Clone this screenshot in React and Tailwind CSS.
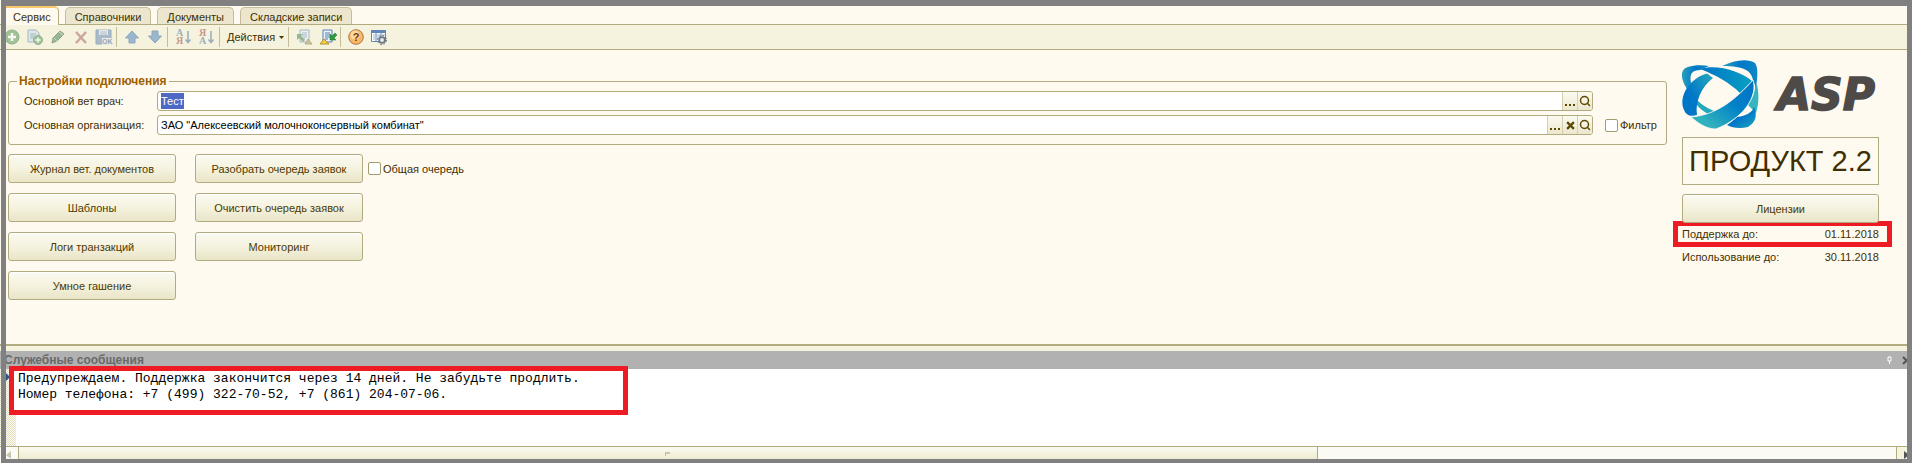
import { Search } from "lucide-react";

const tabs = ["Сервис", "Справочники", "Документы", "Складские записи"];

const buttonLook =
  "rounded-[3px] border border-[#b3ab80] bg-linear-to-b from-[#fbfaf1] via-[#f5f2df] to-[#e9e5c8] text-[#4d3a00] shadow-[inset_0_1px_0_#ffffff]";

function Separator() {
  return <span className="mx-1 h-5 w-px bg-[#c4bd97]" />;
}

function ToolButton({ label, disabled, children }) {
  return (
    <button type="button" aria-label={label} disabled={disabled} className="h-4 w-4 shrink-0 disabled:opacity-50">
      <svg viewBox="0 0 16 16" className="h-4 w-4 overflow-visible">{children}</svg>
    </button>
  );
}

function SortIcon({ top, bottom, topColor, bottomColor }) {
  return (
    <>
      <text x="0" y="7" fontSize="10" fontWeight="bold" fontFamily="Liberation Serif, serif" fill={topColor}>{top}</text>
      <text x="0" y="15" fontSize="10" fontWeight="bold" fontFamily="Liberation Serif, serif" fill={bottomColor}>{bottom}</text>
      <path d="M12 2v11M9.500 10.500l2.500 3 2.500-3" fill="none" stroke="#3f6b9c" strokeWidth="1.500" />
    </>
  );
}

function Page() {
  return (
    <>
      <path d="M3 1h9v12H3z" fill="#e9f1fa" stroke="#5580b0" />
      <path d="M5 4h5M5 6h5M5 8h5M5 10h3" stroke="#5580b0" />
    </>
  );
}

function Toolbar() {
  return (
    <div className="flex h-[26px] items-center border-y border-[#b3ab80] bg-[#f5f2dd] pl-1">
      <div className="flex items-center gap-[7px]">
        <ToolButton label="Добавить" disabled>
          <circle cx="8" cy="8" r="7" fill="#4c9657" stroke="#2e6f45" />
          <path d="M8 4v8M4 8h8" stroke="#fff" strokeWidth="2.500" />
        </ToolButton>
        <ToolButton label="Скопировать" disabled>
          <path d="M1 1h8l3 3v9H1z" fill="#c9dcf0" stroke="#5580b0" />
          <path d="M3 5h6M3 7h5M3 9h4" stroke="#5580b0" />
          <circle cx="11" cy="11" r="4.500" fill="#4c9657" stroke="#2e6f45" />
          <path d="M11 8.500v5M8.500 11h5" stroke="#fff" strokeWidth="1.500" />
        </ToolButton>
        <ToolButton label="Изменить" disabled>
          <path d="M2 14l1-5 7-7 4 3-7 7z" fill="#3c7a4c" stroke="#2c5a3c" />
          <path d="M4 9l3 3M9 3l4 3" stroke="#a9cbb0" />
        </ToolButton>
        <ToolButton label="Удалить" disabled>
          <path d="M3 3l10 11M13 3L3 14" stroke="#a85a5a" strokeWidth="2.500" />
        </ToolButton>
        <ToolButton label="Записать" disabled>
          <path d="M0 1h15v14H0z" fill="#5f86b8" stroke="#3f6b9c" />
          <path d="M3 1h9v5H3z" fill="#dce8f4" />
          <path d="M4 3h7M4 5h7" stroke="#5f86b8" />
          <path d="M6 9h10v7H6z" fill="#dce8f4" />
          <text x="6" y="15" fontSize="7" fontWeight="bold" fontFamily="Liberation Sans, sans-serif" fill="#2d5583">OK</text>
        </ToolButton>
      </div>
      <Separator />
      <div className="ml-[3px] flex items-center gap-[7px]">
        <ToolButton label="Переместить вверх" disabled>
          <path d="M8 2l6.500 7H11v5H5V9H1.500z" fill="#3f7fc0" stroke="#2d5f9c" />
        </ToolButton>
        <ToolButton label="Переместить вниз" disabled>
          <path d="M8 14l6.500-7H11V2H5v5H1.500z" fill="#3f7fc0" stroke="#2d5f9c" />
        </ToolButton>
      </div>
      <Separator />
      <div className="ml-1 flex items-center gap-[7px]">
        <ToolButton label="Сортировать по возрастанию" disabled>
          <SortIcon top="А" bottom="Я" topColor="#3f6b9c" bottomColor="#983c3c" />
        </ToolButton>
        <ToolButton label="Сортировать по убыванию" disabled>
          <SortIcon top="Я" bottom="А" topColor="#983c3c" bottomColor="#3f6b9c" />
        </ToolButton>
      </div>
      <Separator />
      <button type="button" className="ml-[3px] flex items-center gap-1 text-[#3f2f00]">
        Действия
        <svg viewBox="0 0 5 3" className="h-[3px] w-[5px]"><path d="M0 0h5L2.500 3z" fill="#4d3a00" /></svg>
      </button>
      <Separator />
      <div className="ml-1 flex items-center gap-[7px]">
        <ToolButton label="Выгрузить" disabled>
          <Page />
          <path d="M0 5h6L4 7l4 4-2 2-4-4-2 2z" fill="#3c7a4c" />
          <path d="M8 15l3-5 4 5z" fill="#a3915a" stroke="#7a6a3c" />
        </ToolButton>
        <ToolButton label="Загрузить">
          <Page />
          <path d="M15 4l-3 3-2-2v6h6l-2-2 3-3z" fill="#2d9c3c" stroke="#1f702c" strokeWidth=".5" />
          <path d="M0 15l4-5 5 5z" fill="#f2cf45" stroke="#b8912c" />
        </ToolButton>
      </div>
      <Separator />
      <div className="ml-[3px] flex items-center gap-[7px]">
        <ToolButton label="Справка">
          <circle cx="8" cy="8" r="7.300" fill="#fbb965" stroke="#a8744c" />
          <circle cx="7" cy="6" r="4.500" fill="#fdd9a0" />
          <text x="8" y="12" textAnchor="middle" fontSize="11" fontWeight="bold" fontFamily="Liberation Sans, sans-serif" fill="#7a3c00">?</text>
        </ToolButton>
        <ToolButton label="Настройка списка">
          <path d="M.5 1.500h14v11H.5z" fill="#fff" stroke="#5f86b8" />
          <path d="M0 1h15v3H0z" fill="#5f86b8" />
          <path d="M5 2v10M10 2v10" stroke="#5f86b8" />
          <path d="M2 6h2M2 8h2M2 10h2M6 6h3M6 8h2M11 6h3" stroke="#9cb4d0" />
          <circle cx="11" cy="11" r="3" fill="#c5cad3" stroke="#6c7480" strokeWidth="1.500" />
          <circle cx="11" cy="11" r="4.500" fill="none" stroke="#6c7480" strokeDasharray="1.800 1.700" />
          <circle cx="11" cy="11" r="1" fill="#fff" />
        </ToolButton>
      </div>
    </div>
  );
}

function Field({ id, value, selected, clearable }) {
  const cell = "flex w-[15px] items-center justify-center border-l border-[#d5cfac] bg-linear-to-b from-[#fbfaf1] to-[#ece8cd] text-[#5c4800]";
  return (
    <div className="flex h-5 min-w-0 flex-1 overflow-hidden rounded-[3px] border border-[#b3ab80] bg-white">
      <input
        id={id}
        defaultValue={value}
        className={
          selected
            ? "ml-[3px] field-sizing-content self-center bg-[#4d69c4] text-white outline-none"
            : "min-w-0 flex-1 pl-[3px] text-black outline-none"
        }
      />
      {selected && <span className="flex-1" />}
      <button type="button" aria-label="Выбрать" className={cell}>
        <svg viewBox="0 0 10 10" className="h-[10px] w-[10px]"><path d="M0 8h2v2H0zM4 8h2v2H4zM8 8h2v2H8z" fill="#5c4800" /></svg>
      </button>
      {clearable && (
        <button type="button" aria-label="Очистить" className={cell}>
          <svg viewBox="0 0 8 8" className="h-[9px] w-[9px]"><path d="M1 1l6 6M7 1L1 7" stroke="#5c4800" strokeWidth="2" /></svg>
        </button>
      )}
      <button type="button" aria-label="Открыть" className={cell}>
        <Search size={12} strokeWidth={3} />
      </button>
    </div>
  );
}

function Check({ label }) {
  return (
    <label className="flex items-center gap-[2px] whitespace-nowrap">
      <input type="checkbox" className="h-[13px] w-[13px] appearance-none rounded-[2px] border border-[#a39b70] bg-white" />
      {label}
    </label>
  );
}

function ActionButton({ children }) {
  return <button type="button" className={`h-[29px] w-[168px] ${buttonLook}`}>{children}</button>;
}

function Logo() {
  return (
    <svg viewBox="0 0 197 70" className="h-[70px] w-full overflow-visible" role="img" aria-label="ASP">
      <defs>
        <linearGradient id="band-a" x1="0" y1="0" x2="1" y2="1">
          <stop offset="0" stopColor="#0077c8" />
          <stop offset=".5" stopColor="#0077c8" />
          <stop offset="1" stopColor="#20a8bd" />
        </linearGradient>
        <linearGradient id="band-b" x1="0" y1="0" x2="1" y2="0">
          <stop offset="0" stopColor="#0074c6" />
          <stop offset="1" stopColor="#08a0c2" />
        </linearGradient>
        <linearGradient id="band-c" x1="0" y1="1" x2="1" y2="0">
          <stop offset="0" stopColor="#35b5bd" />
          <stop offset=".2" stopColor="#2fb0bd" />
          <stop offset=".6" stopColor="#0080c8" />
          <stop offset="1" stopColor="#0072c4" />
        </linearGradient>
        <linearGradient id="band-d" x1="1" y1="0" x2="0" y2="1">
          <stop offset="0" stopColor="#28aabb" />
          <stop offset=".6" stopColor="#0077c8" />
          <stop offset="1" stopColor="#0074c6" />
        </linearGradient>
        <linearGradient id="band-e" x1="0" y1="0" x2="1" y2="0">
          <stop offset="0" stopColor="#28a0bd" />
          <stop offset=".5" stopColor="#0077c8" />
          <stop offset="1" stopColor="#0d88c4" />
        </linearGradient>
      </defs>
      <path d="M5 29C-2 18-2 9 6 7 12 5 20 5 27 6L18 10C11 10 7 13 9 23z" fill="url(#band-e)" />
      <path d="M40 6C52 0 66-2 73 3 77 8 75 20 74 28L71 20C69 11 63 6 40 6z" fill="url(#band-e)" />
      <path d="M75 24C77 34 77 44 74 53L66 45C71 38 73 32 73 26z" fill="#35b5bd" />
      <path d="M45 65C49 62 52 60 55 57 64 56 71 52 72 47 76 56 73 63 66 67 58 69 50 68 45 65z" fill="url(#band-a)" />
      <path d="M15 40C20 45 25 48 32 51L26 54C21 51 17 48 15 45z" fill="#20a8bd" />
      <path d="M18 9C35 4 58 11 70 21L58 33C48 23 34 15 18 9z" fill="url(#band-b)" />
      <path d="M25 13.500C8 18-4 36 2 50 4 55 8 57 15 55 13 42 19 27 31 18z" fill="url(#band-d)" />
      <path d="M71 20C76 36 62 58 34 69 24 69 16 63 9 57 35 55 54 39 71 20z" fill="url(#band-c)" stroke="#fffaf0" strokeWidth=".8" />
      <text
        x="95"
        y="50"
        fontSize="44"
        fontWeight="bold"
        fontStyle="italic"
        fontFamily="DejaVu Sans, sans-serif"
        fill="#4d4a48"
        stroke="#4d4a48"
        strokeWidth="1.500"
      >
        ASP
      </text>
    </svg>
  );
}

function Connection() {
  return (
    <fieldset className="min-w-0 rounded-[3px] border border-[#b3ab80] pr-[7px] pb-[9px] pl-[15px]">
      <legend className="-ml-[7px] px-[2px] text-[12px] leading-4 font-bold text-[#9c6000]">Настройки подключения</legend>
      <div className="mt-[2px] flex items-center">
        <label htmlFor="vet" className="w-[133px] shrink-0">Основной вет врач:</label>
        <Field id="vet" value="Тест" selected />
        <div className="w-[66px] shrink-0" />
      </div>
      <div className="mt-1 flex items-center">
        <label htmlFor="org" className="w-[133px] shrink-0">Основная организация:</label>
        <Field id="org" value={'ЗАО "Алексеевский молочноконсервный комбинат"'} clearable />
        <div className="w-[66px] shrink-0 pl-3"><Check label="Фильтр" /></div>
      </div>
    </fieldset>
  );
}

function Licence() {
  return (
    <aside className="w-[197px] shrink-0">
      <Logo />
      <div className="mt-[7px] flex h-12 items-center justify-center border border-[#b3ab80] text-[29px] whitespace-nowrap">
        ПРОДУКТ 2.2
      </div>
      <button type="button" className={`mt-[9px] h-[29px] w-full ${buttonLook}`}>Лицензии</button>
      <div className="-mt-[2px] -mr-[13px] -ml-[9px] flex h-[26px] items-center justify-between border-[5px] border-[#ed1c24] bg-[#fffaf0] pr-2 pl-1">
        <span>Поддержка до:</span>
        <span>01.11.2018</span>
      </div>
      <div className="mt-[2px] flex justify-between">
        <span>Использование до:</span>
        <span>30.11.2018</span>
      </div>
    </aside>
  );
}

function Messages() {
  return (
    <section className="flex flex-1 flex-col border-t-2 border-[#b3ab80] bg-[#f5f2dd]">
      <header className="mt-[5px] flex h-[18px] items-center bg-[#b1b1b1] pr-px pl-1 text-[#696969]">
        <h2 className="flex-1 text-[12px] leading-4 font-bold">Служебные сообщения</h2>
        <button type="button" aria-label="Закрепить" className="mr-[10px]">
          <svg viewBox="0 0 5 8" className="h-2 w-[5px]"><path d="M1 1h3v4H1zM2.500 5v3" fill="none" stroke="#fff" /></svg>
        </button>
        <button type="button" aria-label="Закрыть">
          <svg viewBox="0 0 9 9" className="h-[9px] w-[9px]"><path d="M1 1l7 7M8 1L1 8" stroke="#555" strokeWidth="2" /></svg>
        </button>
      </header>
      <div className="flex flex-1 bg-white">
        <div className="w-4 shrink-0 bg-[repeating-conic-gradient(#e3dfc3_0_25%,#fbfaf1_0_50%)] bg-[length:2px_2px] pt-1 pl-[6px]">
          <svg viewBox="0 0 6 8" className="h-2 w-[6px]"><path d="M0 0l4 4-4 4z" fill="#2d5583" /></svg>
        </div>
        <div className="-mt-[3px] -ml-[7px] h-[49px] w-[619px] border-[5px] border-[#ed1c24] bg-white pl-1 font-['Liberation_Mono',monospace] text-[13px] leading-4 whitespace-nowrap text-black">
          <p>Предупреждаем. Поддержка закончится через 14 дней. Не забудьте продлить.</p>
          <p>Номер телефона: +7 (499) 322-70-52, +7 (861) 204-07-06.</p>
        </div>
      </div>
      <div className="flex h-[17px] border-t border-[#b3ab80] bg-[#fbfaf5]">
        <button type="button" aria-label="Прокрутить влево" className="w-[18px] pl-[6px]">
          <svg viewBox="0 0 5 8" className="h-2 w-[5px]"><path d="M5 0v8L0 4z" fill="#c9c6b3" /></svg>
        </button>
        <div className="flex w-[68%] justify-center border-x border-[#b3ab80] bg-linear-to-b from-[#fbfaf1] to-[#ebe6c5] pt-[5px]">
          <svg viewBox="0 0 6 4" className="h-1 w-[6px]"><path d="M0 4V1h5" fill="none" stroke="#a39b70" /></svg>
        </div>
        <div className="flex-1" />
        <button type="button" aria-label="Прокрутить вправо" className="w-4 border-l border-[#b3ab80] bg-[#f5f2dd] pl-[7px]">
          <svg viewBox="0 0 5 8" className="h-2 w-[5px]"><path d="M0 0v8l5-4z" fill="#555" /></svg>
        </button>
      </div>
    </section>
  );
}

export default function App() {
  return (
    <div className="relative flex min-h-screen flex-col overflow-hidden bg-[#fffaf0] font-['Liberation_Sans',Arial,sans-serif] text-[11px] leading-4 text-[#3f2f00]">
      <nav className="-mb-px flex items-end gap-[6px] pt-[6px] pl-[6px]">
        {tabs.map((tab, i) => (
          <button
            key={tab}
            type="button"
            className={
              i === 0
                ? "relative h-[19px] rounded-tr-[5px] border-t-2 border-r border-t-[#f9c86a] border-r-[#b3ab80] bg-[#fffaf0] px-[7px]"
                : "h-[18px] rounded-t-[5px] border border-b-0 border-[#c4bd97] bg-[#ebe6cd] px-[9px]"
            }
          >
            {tab}
          </button>
        ))}
      </nav>
      <Toolbar />
      <main className="flex gap-[15px] pt-[10px] pr-[33px] pb-11 pl-2">
        <div className="min-w-0 flex-1 pt-[13px]">
          <Connection />
          <div className="mt-[9px] flex gap-[19px]">
            <div className="flex flex-col gap-[10px]">
              <ActionButton>Журнал вет. документов</ActionButton>
              <ActionButton>Шаблоны</ActionButton>
              <ActionButton>Логи транзакций</ActionButton>
              <ActionButton>Умное гашение</ActionButton>
            </div>
            <div className="flex flex-col gap-[10px]">
              <div className="flex items-center gap-[5px]">
                <ActionButton>Разобрать очередь заявок</ActionButton>
                <Check label="Общая очередь" />
              </div>
              <ActionButton>Очистить очередь заявок</ActionButton>
              <ActionButton>Мониторинг</ActionButton>
            </div>
          </div>
        </div>
        <Licence />
      </main>
      <Messages />
      {/* window frame */}
      <div className="pointer-events-none absolute inset-y-0 right-0 left-px border-x-[5px] border-t-[6px] border-b-4 border-[#808080]" />
    </div>
  );
}
